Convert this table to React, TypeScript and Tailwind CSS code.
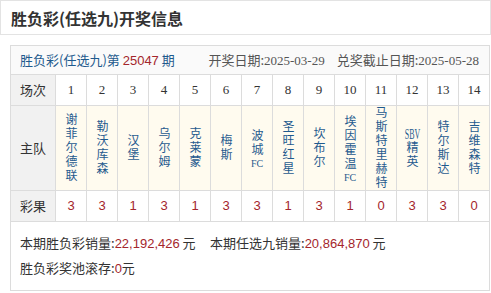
import React from 'react';

const teams = [
  "谢菲尔德联", "勒沃库森", "汉堡", "乌尔姆", "克莱蒙", "梅斯", "波城FC",
  "圣旺红星", "坎布尔", "埃因霍温FC", "马斯特里赫特", "SBV精英", "特尔斯达", "吉维森特"
];
const results = ["3", "3", "1", "3", "1", "3", "3", "1", "3", "1", "0", "3", "3", "0"];

const cn = { fontFamily: '"Noto Sans CJK SC", "Noto Sans", sans-serif' };
const num = { fontFamily: '"Liberation Sans", Arial, sans-serif' };
const serif = { fontFamily: '"Liberation Serif", "Noto Sans CJK SC", serif' };

// split team name so that latin runs (FC, SBV) stay together
function splitName(name: string) {
  const parts: string[] = [];
  let buf = "";
  for (const ch of name) {
    if (/[A-Za-z]/.test(ch)) {
      buf += ch;
    } else {
      if (buf) { parts.push(buf); buf = ""; }
      parts.push(ch);
    }
  }
  if (buf) parts.push(buf);
  return parts;
}

export default function App() {
  return (
    <div className="w-[491px] h-[293px] bg-white text-[13px] text-[#333]" style={cn}>
      <div className="h-[35px] border border-[#e3e3e3] flex items-center pl-[10px]">
        <h1 className="text-[16px] font-bold text-[#333] leading-none">胜负彩(任选九)开奖信息</h1>
      </div>

      <div className="mt-[10px] ml-[10px] w-[480px] border border-[#dcdcdc]">
        <div className="h-[29px] bg-[#fafafa] border-b border-[#dcdcdc] flex items-center justify-between pl-[9px] pr-[10px]">
          <div className="text-[#1f5a8e]">
            胜负彩(任选九)第 <span className="text-[#a4262c]" style={num}>25047</span> 期
          </div>
          <div className="text-[#555]">
            开奖日期:<span style={serif}>2025-03-29</span>
            <span className="ml-[12px]">兑奖截止日期:</span><span style={serif}>2025-05-28</span>
          </div>
        </div>

        <div className="grid grid-cols-[45px_repeat(13,31px)_30px]">
          <div className="h-[31px] bg-[#f1f1f1] border-r border-b border-[#dcdcdc] flex items-center justify-center">场次</div>
          {teams.map((_, i) => (
            <div
              key={i}
              className={"h-[31px] border-b border-[#dcdcdc] flex items-center justify-center text-[#333] " + (i < 13 ? "border-r" : "")}
              style={serif}
            >
              {i + 1}
            </div>
          ))}

          <div className="h-[85px] bg-[#f1f1f1] border-r border-b border-[#dcdcdc] flex items-center justify-center">主队</div>
          {teams.map((t, i) => (
            <div
              key={i}
              className={"h-[85px] bg-[#fffbef] border-b border-[#dcdcdc] flex items-center justify-center " + (i < 13 ? "border-r" : "")}
            >
              <div className="[writing-mode:vertical-rl] [text-orientation:upright] text-[12px] tracking-[2px] leading-[14px] text-[#1f5a8e]">
                {splitName(t).map((c, j) =>
                  /[A-Za-z]/.test(c) ? (
                    <span
                      key={j}
                      className={"[text-combine-upright:all] tracking-normal " + (c.length > 2 ? "text-[14px]" : "text-[11px]")}
                      style={serif}
                    >
                      {c}
                    </span>
                  ) : (
                    c
                  )
                )}
              </div>
            </div>
          ))}

          <div className="h-[31px] bg-[#f1f1f1] border-r border-b border-[#dcdcdc] flex items-center justify-center">彩果</div>
          {results.map((r, i) => (
            <div
              key={i}
              className={"h-[31px] border-b border-[#dcdcdc] flex items-center justify-center text-[#a4262c] " + (i < 13 ? "border-r" : "")}
              style={num}
            >
              {r}
            </div>
          ))}
        </div>

        <div className="h-[68px] pl-[9px] flex flex-col justify-center gap-[4px] leading-[20px]">
          <div className="flex">
            <div className="w-[190px]">
              本期胜负彩销量:<span className="text-[#a4262c]" style={num}>22,192,426</span> 元
            </div>
            <div>
              本期任选九销量:<span className="text-[#a4262c]" style={num}>20,864,870</span> 元
            </div>
          </div>
          <div>
            胜负彩奖池滚存:<span className="text-[#a4262c]" style={num}>0</span>元
          </div>
        </div>
      </div>
    </div>
  );
}
